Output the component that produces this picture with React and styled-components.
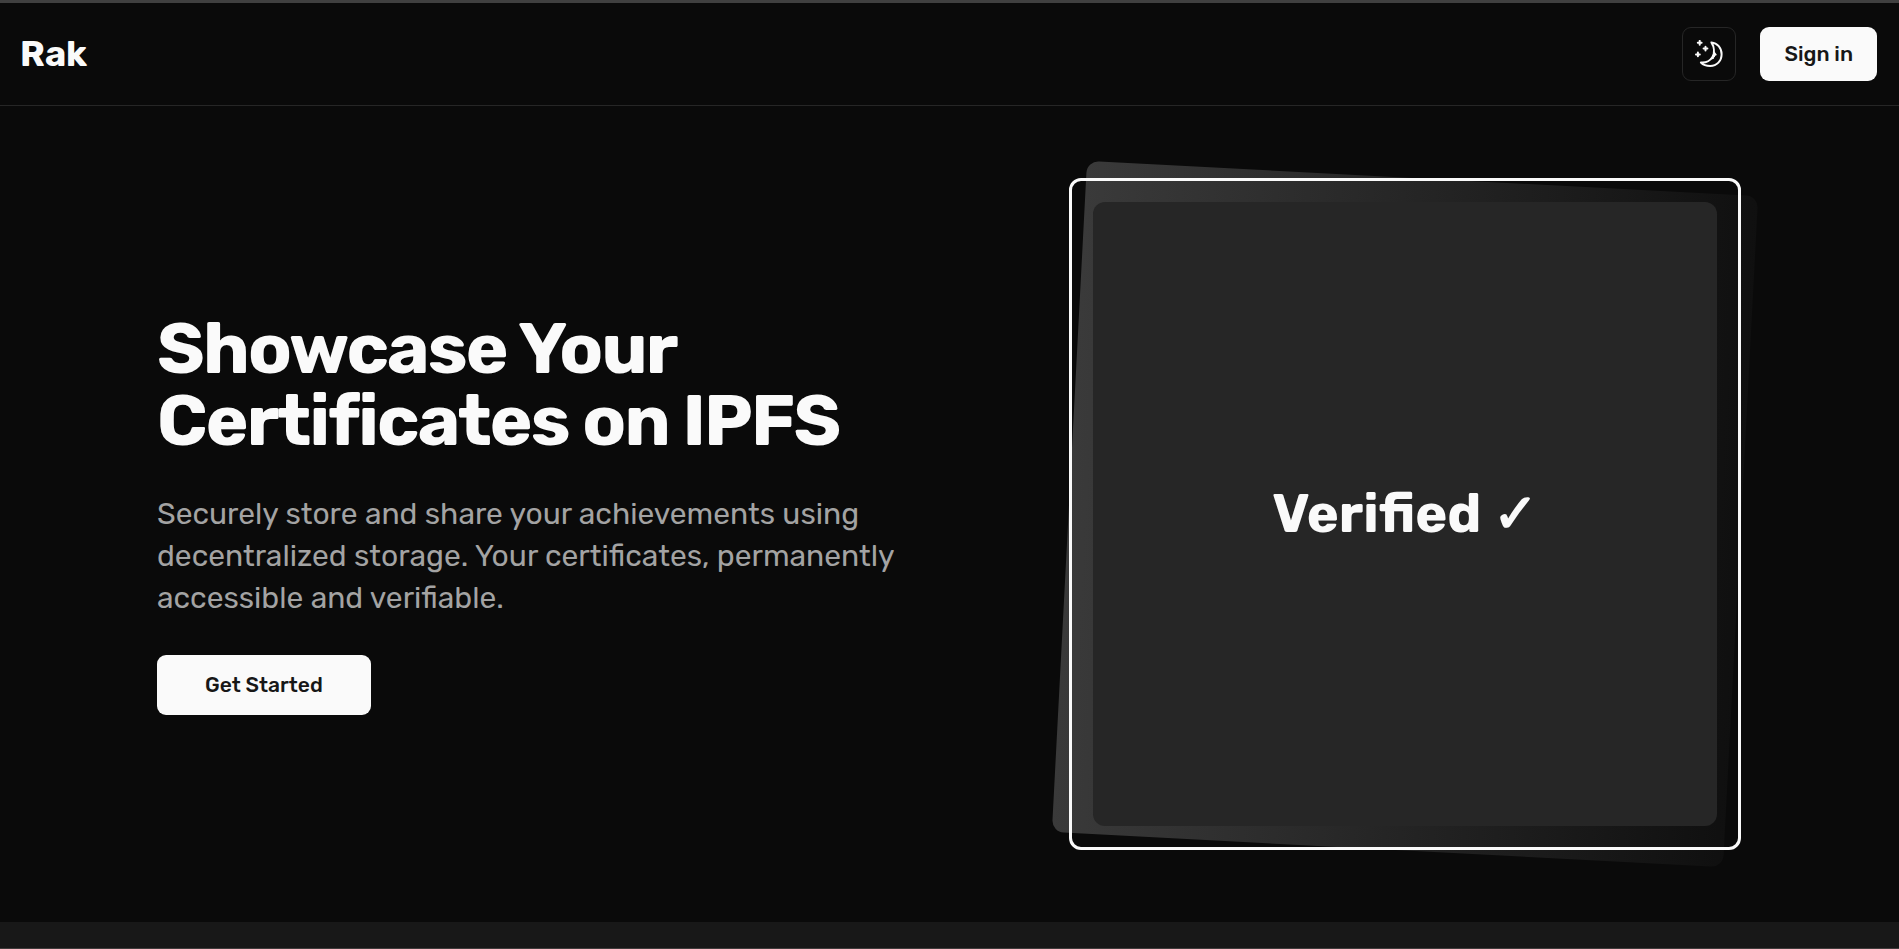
import React from 'react';
import styled, { createGlobalStyle, css } from 'styled-components';

const GlobalStyle = createGlobalStyle`
  *, *::before, *::after { box-sizing: border-box; }
  body {
    margin: 0;
    background: #0a0a0a;
    color: #fafafa;
    font-family: Rubik, "Noto Sans", sans-serif;
  }
`;

const Page = styled.div`
  min-height: 100vh;
  display: flex;
  flex-direction: column;
  overflow: hidden;
  border-top: 3px solid #404040;
`;

const Header = styled.header`
  display: flex;
  align-items: center;
  justify-content: space-between;
  padding: 24px 22px 24px 20px;
  border-bottom: 1px solid #262626;
`;

const Logo = styled.a`
  color: inherit;
  font-size: 36px;
  line-height: 48px;
  font-weight: 700;
  text-decoration: none;
`;

const Actions = styled.div`
  display: flex;
  align-items: center;
  gap: 24px;
`;

const Button = styled.button`
  display: inline-flex;
  align-items: center;
  justify-content: center;
  height: 54px;
  padding: 0 24px;
  border: 0;
  border-radius: 9px;
  background: #fafafa;
  color: #171717;
  font: inherit;
  font-size: 21px;
  font-weight: 500;
  line-height: 30px;
  cursor: pointer;

  ${({ $variant }) => $variant === 'icon' && css`
    width: 54px;
    padding: 0;
    border: 1px solid #262626;
    background: #0a0a0a;
    color: #fafafa;
  `}

  ${({ $size }) => $size === 'large' && css`
    height: 60px;
    padding: 0 48px;
  `}
`;

const Hero = styled.main`
  display: grid;
  grid-template-columns: 1fr 1fr;
  align-items: center;
  gap: 72px;
  padding: 72px 158px 72px 157px;
`;

const Intro = styled.div`
  display: flex;
  flex-direction: column;
  align-items: flex-start;
  gap: 36px;
`;

const Title = styled.h1`
  margin: 0;
  font-size: 72px;
  line-height: 72px;
  font-weight: 700;
  letter-spacing: -0.025em;
`;

const Lead = styled.p`
  margin: 0;
  color: #a3a3a3;
  font-size: 30px;
  line-height: 42px;
`;

const Showcase = styled.div`
  position: relative;
  justify-self: end;
  width: 100%;
  max-width: 672px;
  aspect-ratio: 1;
`;

const Glow = styled.div`
  position: absolute;
  inset: 0;
  border-radius: 12px;
  background: linear-gradient(to right, #fafafa, #262626);
  opacity: 0.2;
  transform: rotate(3deg);
`;

const Frame = styled.div`
  position: relative;
  display: flex;
  height: 100%;
  padding: 21px;
  border: 3px solid #fafafa;
  border-radius: 12px;
`;

const Certificate = styled.div`
  flex: 1;
  display: flex;
  align-items: center;
  justify-content: center;
  border-radius: 12px;
  background: #262626;
  font-size: 54px;
  line-height: 60px;
  font-weight: 700;
`;

const NextSection = styled.section`
  flex: 1;
  background: #181818;
  border-bottom: 1px solid #403c3c;
`;

const MoonIcon = () => (
  <svg width="28" height="28" viewBox="0 0 28 28" fill="none" stroke="currentColor" strokeLinecap="round" strokeLinejoin="round" aria-hidden="true">
    <path strokeWidth="2" d="M16.4 2.4C22.4 3 26.6 7.9 26.6 14.2C26.6 21 21.8 26 15.2 26C11.3 26 8 24.7 5.9 22.5C11 22.9 15.2 20.5 17.3 17.2C19.8 13 19.3 7 16.4 2.4Z" />
    <path fill="currentColor" stroke="none" d="M18.3 9.5L20 12.3L21.7 14.6C21.9 15.4 20.9 15.9 20.1 15.7L19.9 17.1L18.9 17.5L19 18.5C18.2 19.5 16.8 19.3 15.7 19L18.1 14Z" />
    <path strokeWidth="2" d="M4.7 .9V4.700M2.800 2.800H6.600M10.500 6.700V10.500M8.600 8.600H12.400M2.900 12.500V16.300M1 14.400H4.800" />
  </svg>
);

export default function App() {
  return (
    <>
      <GlobalStyle />
      <Page>
        <Header>
          <Logo href="#">Rak</Logo>
          <Actions>
            <Button type="button" $variant="icon" aria-label="Toggle theme">
              <MoonIcon />
            </Button>
            <Button type="button">Sign in</Button>
          </Actions>
        </Header>
        <Hero>
          <Intro>
            <Title>Showcase Your Certificates on IPFS</Title>
            <Lead>
              Securely store and share your achievements using decentralized
              storage. Your certificates, permanently accessible and verifiable.
            </Lead>
            <Button type="button" $size="large">Get Started</Button>
          </Intro>
          <Showcase>
            <Glow />
            <Frame>
              <Certificate>Verified ✓</Certificate>
            </Frame>
          </Showcase>
        </Hero>
        <NextSection />
      </Page>
    </>
  );
}
